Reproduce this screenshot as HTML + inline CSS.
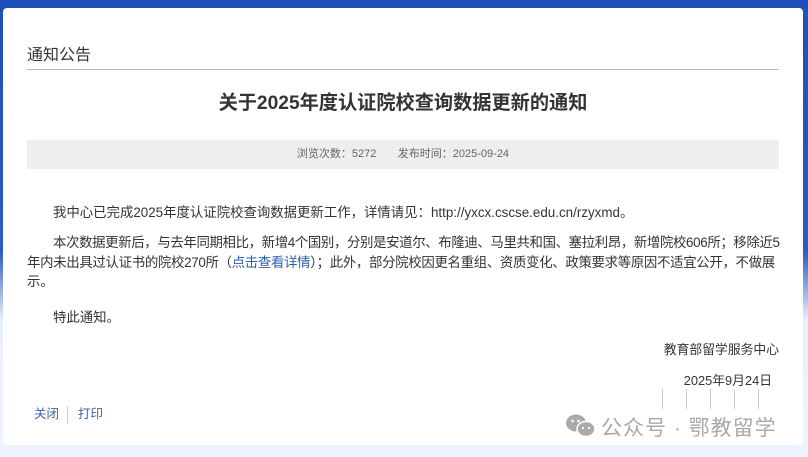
<!DOCTYPE html>
<html><head><meta charset="utf-8"><style>
*{margin:0;padding:0;box-sizing:border-box}
body{width:808px;height:457px;overflow:hidden;position:relative;font-family:"Liberation Sans","Noto Sans CJK SC",sans-serif;color:#333;background:linear-gradient(180deg,#1f4fb8 0,#2a5cc4 55%,#e8f0fb 70%,#eef4fd 100%)}
.card{position:absolute;left:3px;top:8px;width:800px;height:437px;background:#fff;border-radius:4px}
.hd{position:absolute;left:24px;top:33px;font-size:16px;color:#333}
.rule{position:absolute;left:24px;right:24px;top:61px;height:1px;background:#bbb}
.title{position:absolute;left:0;right:0;top:79px;text-align:center;font-size:19.2px;font-weight:bold;color:#333}
.band{position:absolute;left:24px;right:24px;top:132px;height:29px;background:#eee;font-size:11px;color:#666;text-align:center;line-height:29px}
.body{position:absolute;left:24px;right:0;top:195px;font-size:13.4px;line-height:19.5px;color:#333}
.body p{margin-bottom:10.5px;white-space:nowrap}
.body a{color:#2d5fa8;text-decoration:none}
.sign{position:absolute;right:24px;font-size:12.8px}
.links{position:absolute;left:31px;top:395px;font-size:12.5px;color:#3b63a4}
.links span.sep{display:inline-block;width:1px;height:18px;background:#ccc;vertical-align:middle;margin:0 10px 0 8px}
.wm{position:absolute;left:565px;top:412px;font-size:21px;color:#a9a9a9;letter-spacing:1px}
.ticks{position:absolute;top:389px;height:20px;width:1px;background:#ccc}
</style></head><body>
<div class="card">
<div class="hd">通知公告</div>
<div class="rule"></div>
<div class="title">关于2025年度认证院校查询数据更新的通知</div>
<div class="band">浏览次数：5272&nbsp;&nbsp;&nbsp;&nbsp;&nbsp;&nbsp;&nbsp;发布时间：2025-09-24</div>
<div class="body">
<p><span style="padding-left:26px">我中心已完成2025年度认证院校查询数据更新工作，详情请见：http://yxcx.cscse.edu.cn/rzyxmd。</span></p>
<p><span style="padding-left:26px;letter-spacing:-0.35px">本次数据更新后，与去年同期相比，新增4个国别，分别是安道尔、布隆迪、马里共和国、塞拉利昂，新增院校606所；移除近5</span><br><span style="letter-spacing:-0.3px">年内未出具过认证书的院校270所（<a>点击查看详情</a>）；此外，部分院校因更名重组、资质变化、政策要求等原因不适宜公开，不做展</span><br>示。</p>
<p style="margin-top:16px"><span style="padding-left:26px">特此通知。</span></p>
</div>
<div class="sign" style="top:331px">教育部留学服务中心</div>
<div class="sign" style="top:362px;right:31px">2025年9月24日</div>
<div class="links">关闭<span class="sep"></span>打印</div>
</div>
<div class="ticks" style="left:662px"></div><div class="ticks" style="left:686px"></div><div class="ticks" style="left:710px"></div><div class="ticks" style="left:734px"></div><div class="ticks" style="left:758px"></div>
<svg style="position:absolute;left:565px;top:414px" width="32" height="24" viewBox="0 0 32 24"><ellipse cx="11" cy="9" rx="10" ry="8.5" fill="#aaa"/><ellipse cx="21" cy="15" rx="9" ry="7.5" fill="#aaa" stroke="#fff" stroke-width="1.5"/><circle cx="7.5" cy="7" r="1.3" fill="#fff"/><circle cx="13.5" cy="7" r="1.3" fill="#fff"/><circle cx="18" cy="14" r="1.1" fill="#fff"/><circle cx="24" cy="14" r="1.1" fill="#fff"/></svg>
<div class="wm" style="left:601px">公众号 · 鄂教留学</div>
</body></html>
